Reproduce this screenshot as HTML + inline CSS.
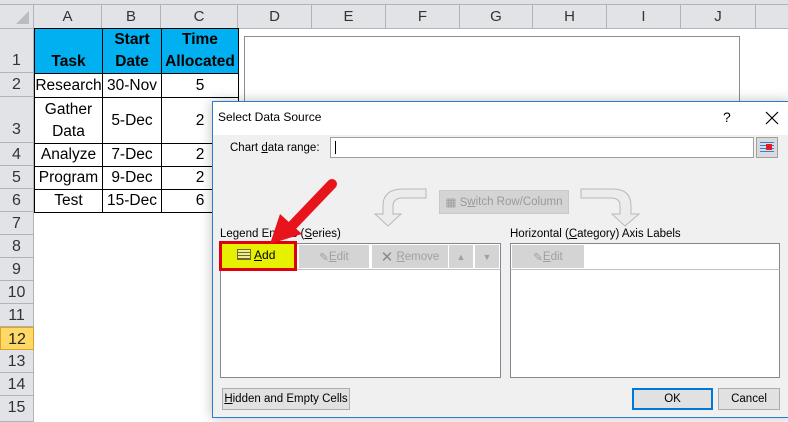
<!DOCTYPE html>
<html><head><style>
*{box-sizing:border-box;margin:0;padding:0}
body{width:788px;height:422px;overflow:hidden;background:#fff;font-family:"Liberation Sans",sans-serif;position:relative}
.a{position:absolute}
.ch{position:absolute;top:5px;height:24px;background:#e1e3e6;border-right:1px solid #b0b3b8;border-bottom:1px solid #b0b3b8;font-size:15px;color:#333;text-align:center;line-height:24px}
.rh{position:absolute;left:0;width:34px;background:#e1e3e6;border-bottom:1px solid #b0b3b8;border-right:1px solid #b0b3b8;font-size:16px;color:#333;text-align:center}
.c{position:absolute;border:1px solid #000;font-size:15.5px;text-align:center;color:#000;display:flex;align-items:center;justify-content:center;line-height:22px}
.h{background:#00b0f0;font-weight:bold;align-items:flex-end}
.dl{font-family:"Liberation Sans",sans-serif;font-size:11.5px;color:#000}
.btn{position:absolute;background:#e1e1e1;border:1px solid #adadad;font-size:11.5px;display:flex;align-items:center;justify-content:center}
.dis{color:#a0a0a0;background:#d4d4d4;border-color:#d4d4d4}
</style></head><body>
<div class="a" style="left:0;top:0;width:788px;height:5px;background:#dfe1e4;border-bottom:1px solid #b0b3b8"></div>
<div class="ch" style="left:0;width:34px"><div style="position:absolute;right:4px;bottom:4px;width:0;height:0;border-left:13px solid transparent;border-bottom:13px solid #b9bcc0"></div></div>
<div class="ch" style="left:34px;width:68px">A</div>
<div class="ch" style="left:102px;width:59px">B</div>
<div class="ch" style="left:161px;width:77px">C</div>
<div class="ch" style="left:238px;width:74px">D</div>
<div class="ch" style="left:312px;width:74px">E</div>
<div class="ch" style="left:386px;width:74px">F</div>
<div class="ch" style="left:460px;width:73px">G</div>
<div class="ch" style="left:533px;width:74px">H</div>
<div class="ch" style="left:607px;width:74px">I</div>
<div class="ch" style="left:681px;width:75px">J</div>
<div class="ch" style="left:756px;width:40px"></div>
<div class="rh" style="top:29px;height:44px;line-height:64px">1</div>
<div class="rh" style="top:73px;height:24px;line-height:24px">2</div>
<div class="rh" style="top:97px;height:46px;line-height:66px">3</div>
<div class="rh" style="top:143px;height:23px;line-height:23px">4</div>
<div class="rh" style="top:166px;height:23px;line-height:23px">5</div>
<div class="rh" style="top:189px;height:23px;line-height:23px">6</div>
<div class="rh" style="top:212px;height:23px;line-height:23px">7</div>
<div class="rh" style="top:235px;height:23px;line-height:23px">8</div>
<div class="rh" style="top:258px;height:23px;line-height:23px">9</div>
<div class="rh" style="top:281px;height:23px;line-height:23px">10</div>
<div class="rh" style="top:304px;height:23px;line-height:23px">11</div>
<div class="rh" style="top:327px;height:23px;line-height:23px;background:#ffd966;border:1px solid #e0a030;color:#222">12</div>
<div class="rh" style="top:350px;height:23px;line-height:23px">13</div>
<div class="rh" style="top:373px;height:23px;line-height:23px">14</div>
<div class="rh" style="top:396px;height:26px;line-height:23px">15</div>

<div class="c h" style="left:34px;top:28px;width:69px;height:46px">Task</div>
<div class="c h" style="left:102px;top:28px;width:60px;height:46px">Start<br>Date</div>
<div class="c h" style="left:161px;top:28px;width:78px;height:46px">Time<br>Allocated</div>
<div class="c" style="left:34px;top:73px;width:69px;height:25px">Research</div>
<div class="c" style="left:102px;top:73px;width:60px;height:25px">30-Nov</div>
<div class="c" style="left:161px;top:73px;width:78px;height:25px">5</div>
<div class="c" style="left:34px;top:97px;width:69px;height:47px">Gather<br>Data</div>
<div class="c" style="left:102px;top:97px;width:60px;height:47px">5-Dec</div>
<div class="c" style="left:161px;top:97px;width:78px;height:47px">2</div>
<div class="c" style="left:34px;top:143px;width:69px;height:24px">Analyze</div>
<div class="c" style="left:102px;top:143px;width:60px;height:24px">7-Dec</div>
<div class="c" style="left:161px;top:143px;width:78px;height:24px">2</div>
<div class="c" style="left:34px;top:166px;width:69px;height:24px">Program</div>
<div class="c" style="left:102px;top:166px;width:60px;height:24px">9-Dec</div>
<div class="c" style="left:161px;top:166px;width:78px;height:24px">2</div>
<div class="c" style="left:34px;top:189px;width:69px;height:24px">Test</div>
<div class="c" style="left:102px;top:189px;width:60px;height:24px">15-Dec</div>
<div class="c" style="left:161px;top:189px;width:78px;height:24px">6</div>

<div class="a" style="left:244px;top:36px;width:496px;height:100px;border:1px solid #8c8c8c;background:#fff"></div>

<!-- dialog -->
<div class="a" style="left:212px;top:101px;width:580px;height:317px;background:#f0f0f0;border:1px solid #2b7bd0;box-shadow:0 0 12px rgba(0,0,0,.25)">
 <div class="a dl" style="left:0;top:0;width:580px;height:33px;background:#fff;padding:8px 0 0 5px;font-size:12px">Select Data Source</div>
 <div class="a" style="left:510px;top:7px;font-size:14px">?</div>
 <svg class="a" style="left:552px;top:9px" width="14" height="14"><path d="M1 1L13 13M13 1L1 13" stroke="#000" stroke-width="1.2"/></svg>
 <div class="a dl" style="left:17px;top:40px">Chart <u>d</u>ata range:</div>
 <div class="a" style="left:117px;top:35px;width:424px;height:21px;background:#fff;border:1px solid #a0a0a0"><div style="position:absolute;left:4px;top:3px;width:1px;height:13px;background:#000"></div></div>
 <div class="a" style="left:543px;top:35px;width:22px;height:21px;border:1px solid #a0a0a0;background:#dadada"><div style="position:absolute;left:3px;top:4px;width:14px;height:11px;background:repeating-linear-gradient(#4a7bc0 0 1px,#cfe0f5 1px 3px)"></div><div style="position:absolute;left:9px;top:6px;width:6px;height:6px;background:#e02020"></div></div>
 <svg class="a" style="left:150px;top:84px" width="80" height="42"><path d="M63 3 H40 Q20 3 20 20 V28 H12 L25 40 L38 28 H30 V20 Q30 12 40 12 H63 Z" fill="#ececec" stroke="#b8b8b8"/></svg>
 <svg class="a" style="left:360px;top:84px" width="80" height="42"><path d="M8 3 H40 Q58 3 58 20 V28 H66 L52 40 L39 28 H47 V20 Q47 12 38 12 H8 Z" fill="#ececec" stroke="#b8b8b8"/></svg>
 <div class="btn dis" style="left:226px;top:88px;width:130px;height:24px;border-color:#c8c8c8;color:#9a9a9a">▦ S<u>w</u>itch Row/Column</div>
 <div class="a dl" style="left:7px;top:126px">Legend Entries (<u>S</u>eries)</div>
 <div class="a dl" style="left:297px;top:126px">Horizontal (<u>C</u>ategory) Axis Labels</div>
 <div class="a" style="left:7px;top:141px;width:281px;height:135px;background:#fff;border:1px solid #828790"></div>
 <div class="a" style="left:297px;top:141px;width:270px;height:135px;background:#fff;border:1px solid #828790"></div>
 <div class="a" style="left:7px;top:141px;width:281px;height:27px;background:#fff;border:1px solid #828790;border-bottom:1px solid #c0c0c0"></div>
 <div class="a" style="left:297px;top:141px;width:270px;height:27px;border:1px solid #828790;border-bottom:1px solid #c0c0c0"></div>
 <div class="btn dis" style="left:86px;top:143px;width:70px;height:23px">✎ <u>E</u>dit</div>
 <div class="btn dis" style="left:159px;top:143px;width:76px;height:23px"><span style="font-size:15px;color:#8a8a8a">✕</span>&nbsp;<u>R</u>emove</div>
 <div class="btn dis" style="left:236px;top:143px;width:24px;height:23px;font-size:9px">▲</div>
 <div class="btn dis" style="left:262px;top:143px;width:24px;height:23px;font-size:9px">▼</div>
 <div class="btn dis" style="left:299px;top:143px;width:72px;height:23px">✎ <u>E</u>dit</div>
 <div class="a" style="left:6px;top:139px;width:78px;height:30px;border:3px solid #e0000b;background:#e7f000"></div>
 <div class="a dl" style="left:24px;top:146px;font-size:12px"><span style="display:inline-block;width:14px;height:11px;background:repeating-linear-gradient(#f2ea90 0 2px,#6a6a2a 2px 3px);border:1px solid #6a6a2a;vertical-align:-1px;margin-right:3px"></span><u>A</u>dd</div>
 <div class="btn" style="left:9px;top:286px;width:128px;height:22px"><u>H</u>idden and Empty Cells</div>
 <div class="btn" style="left:419px;top:286px;width:81px;height:22px;border:2px solid #0078d7">OK</div>
 <div class="btn" style="left:505px;top:286px;width:62px;height:22px">Cancel</div>
</div>
<svg class="a" style="left:260px;top:170px" width="90" height="85"><path d="M72 14 L28 60" stroke="#e8141b" stroke-width="10" stroke-linecap="round"/><path d="M10 74 L20 44 L42 64 Z" fill="#e8141b"/></svg>
</body></html>
